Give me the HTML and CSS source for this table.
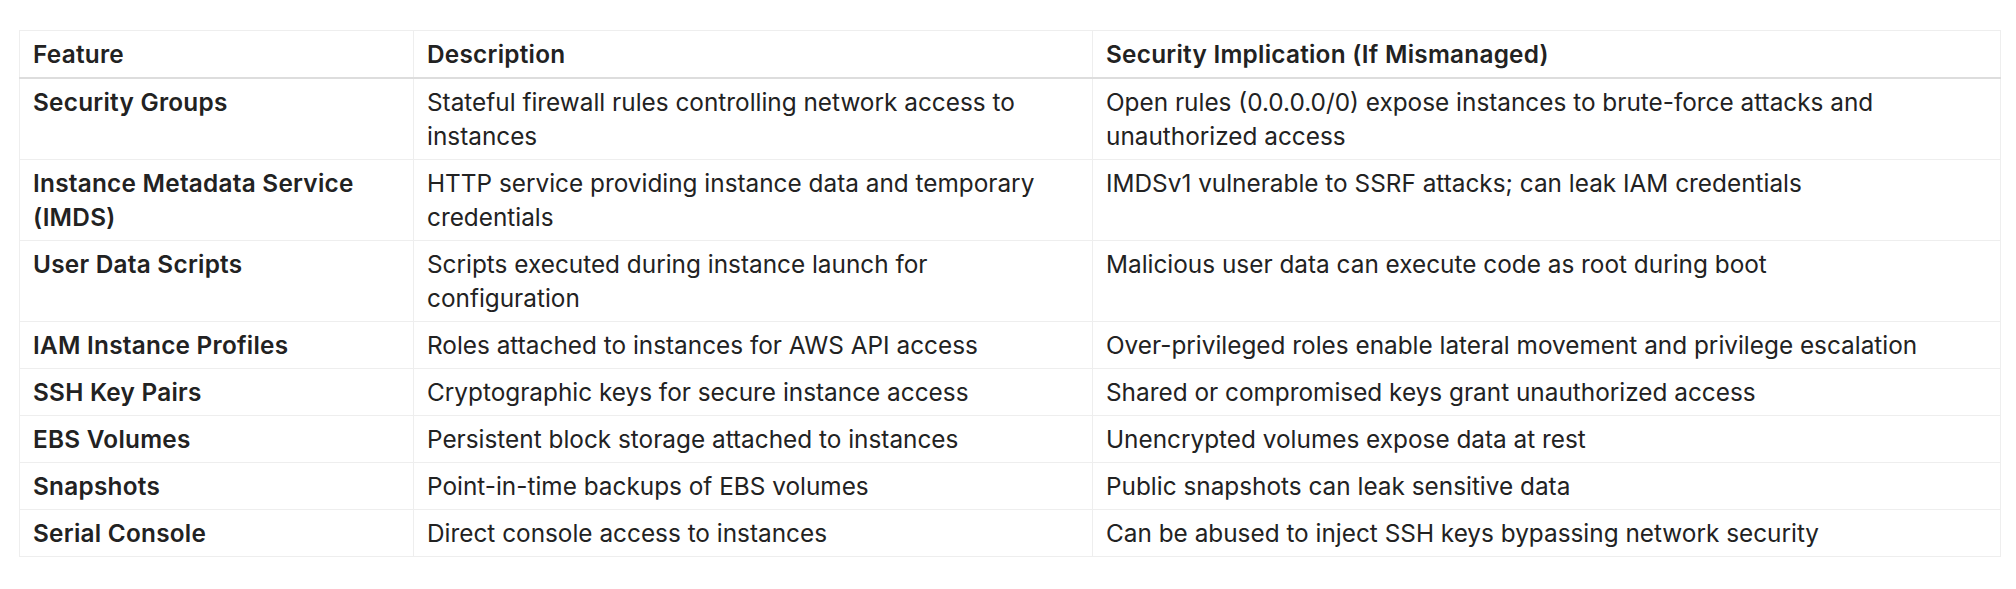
FILE: index.html
```html
<!DOCTYPE html>
<html lang="en">
<head>
<meta charset="utf-8">
<title>EC2 Security Features</title>
<link rel="stylesheet" href="styles.css">
</head>
<body>
<main class="page">
  <table class="features">
    <colgroup>
      <col class="c-feature">
      <col class="c-desc">
      <col class="c-impl">
    </colgroup>
    <thead>
      <tr>
        <th>Feature</th>
        <th>Description</th>
        <th>Security Implication (If Mismanaged)</th>
      </tr>
    </thead>
    <tbody>
      <tr>
        <td class="name">Security Groups</td>
        <td>Stateful firewall rules controlling network access to instances</td>
        <td>Open rules (0.0.0.0/0) expose instances to brute-force attacks and unauthorized access</td>
      </tr>
      <tr>
        <td class="name">Instance Metadata Service (IMDS)</td>
        <td>HTTP service providing instance data and temporary credentials</td>
        <td>IMDSv1 vulnerable to SSRF attacks; can leak IAM credentials</td>
      </tr>
      <tr>
        <td class="name">User Data Scripts</td>
        <td>Scripts executed during instance launch for configuration</td>
        <td>Malicious user data can execute code as root during boot</td>
      </tr>
      <tr>
        <td class="name">IAM Instance Profiles</td>
        <td>Roles attached to instances for AWS API access</td>
        <td>Over-privileged roles enable lateral movement and privilege escalation</td>
      </tr>
      <tr>
        <td class="name">SSH Key Pairs</td>
        <td>Cryptographic keys for secure instance access</td>
        <td>Shared or compromised keys grant unauthorized access</td>
      </tr>
      <tr>
        <td class="name">EBS Volumes</td>
        <td>Persistent block storage attached to instances</td>
        <td>Unencrypted volumes expose data at rest</td>
      </tr>
      <tr>
        <td class="name">Snapshots</td>
        <td>Point-in-time backups of EBS volumes</td>
        <td>Public snapshots can leak sensitive data</td>
      </tr>
      <tr>
        <td class="name">Serial Console</td>
        <td>Direct console access to instances</td>
        <td>Can be abused to inject SSH keys bypassing network security</td>
      </tr>
    </tbody>
  </table>
</main>
</body>
</html>
```

FILE: styles.css
```css
html, body {
  margin: 0;
  padding: 0;
  background: #ffffff;
}

body {
  font-family: Inter, "Noto Sans", "Liberation Sans", sans-serif;
  color: #222222;
  font-size: 24.35px;
  line-height: 34px;
}

.page {
  padding: 30px 16px 0 19px;
}

.features {
  width: 1981px;
  border-collapse: collapse;
  table-layout: fixed;
}

.c-feature { width: 394px; }
.c-desc { width: 679px; }
.c-impl { width: 908px; }

.features th,
.features td {
  border: 1px solid #eeeeee;
  padding: 6px 13px;
  text-align: left;
  vertical-align: top;
}

.features th {
  font-weight: 600;
  letter-spacing: 0.25px;
  border-bottom: 2px solid #dddddd;
}

.features td.name {
  font-weight: 600;
  letter-spacing: 0.25px;
}
```
